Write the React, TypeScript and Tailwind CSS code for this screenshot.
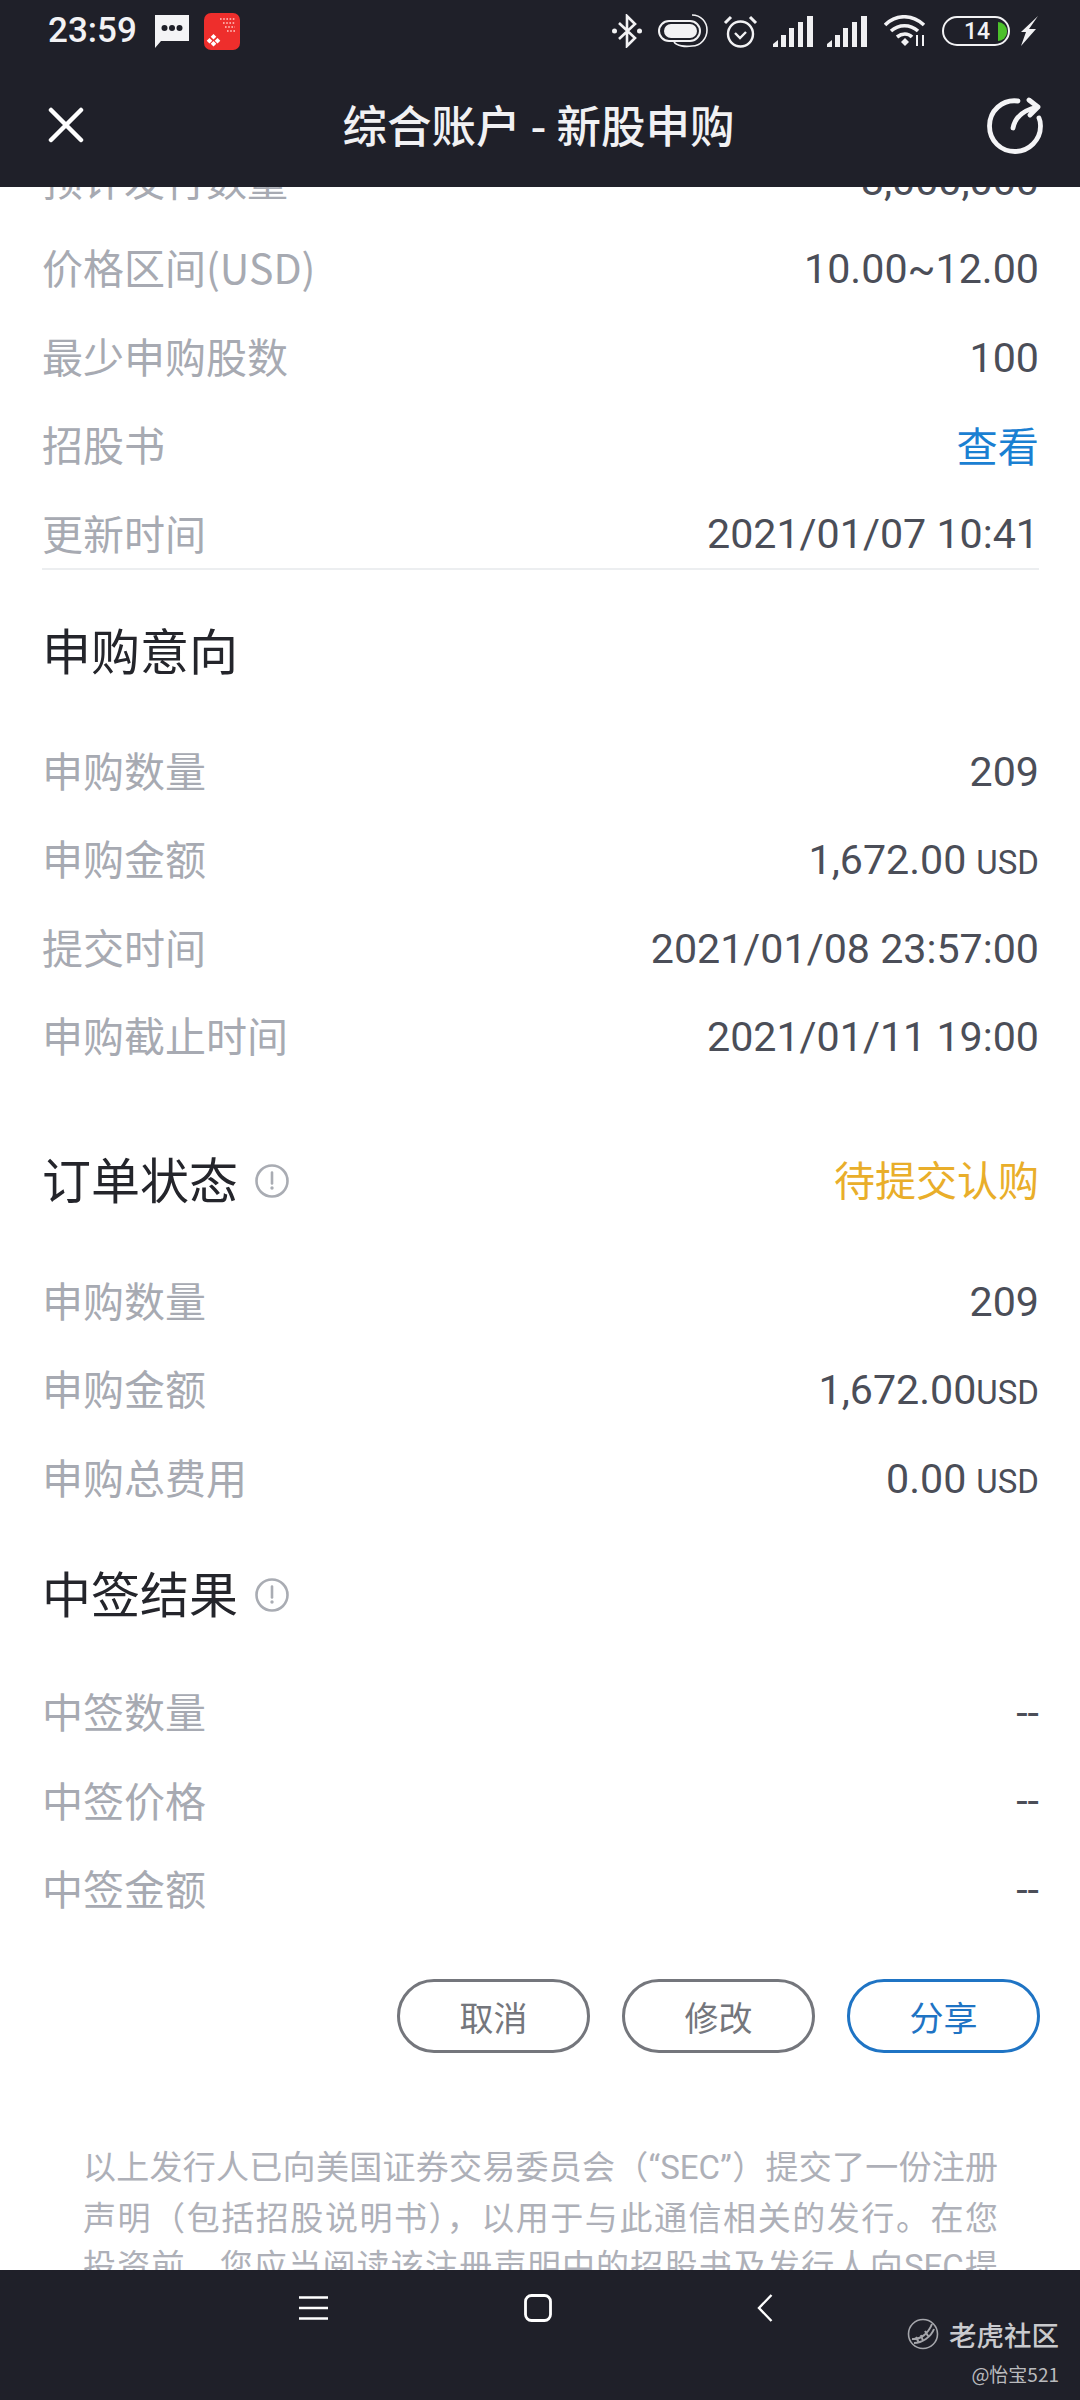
import React from "react";

const cjk = "font-['Noto_Sans_CJK_SC','Noto_Sans',sans-serif]";
const num = "font-['Roboto','Noto_Sans_CJK_SC',sans-serif]";

function Row({ label, children }: { label: string; children: React.ReactNode }) {
  return (
    <div className="flex h-[88.4px] items-center justify-between">
      <span className={`${cjk} mb-[5px] text-[41px] text-[#a7aab2]`}>{label}</span>
      <span className={`${num} mt-[1px] text-[41.2px] text-[#4b4e58]`}>{children}</span>
    </div>
  );
}

function Usd({ tight }: { tight?: boolean }) {
  return <span className={`${tight ? "" : "ml-[10px]"} text-[33px]`}>USD</span>;
}

function Info() {
  return (
    <svg width="36" height="36" viewBox="0 0 36 36" className="ml-[16px] mt-[5px]" fill="none">
      <circle cx="18" cy="18" r="15.5" stroke="#a9acb3" strokeWidth="2.6" />
      <path d="M18 9.5v11" stroke="#a9acb3" strokeWidth="2.6" strokeLinecap="round" />
      <circle cx="18" cy="25" r="1.7" fill="#a9acb3" />
    </svg>
  );
}

function Heading({ children, info }: { children: string; info?: boolean }) {
  return (
    <div className="flex items-center">
      <span className={`${cjk} text-[49px] leading-[60px] text-[#24252b]`}>{children}</span>
      {info && <Info />}
    </div>
  );
}

function Btn({ children, blue }: { children: string; blue?: boolean }) {
  return (
    <button
      className={`${cjk} flex h-[74px] w-[193px] items-center justify-center rounded-full border-[3px] text-[34px] ${
        blue ? "border-[#1f74c4] text-[#1f74c4]" : "border-[#74767c] text-[#74767c]"
      }`}
    >
      {children}
    </button>
  );
}

function Signal() {
  return (
    <svg width="41" height="31" viewBox="0 0 41 31" fill="#f0f0f2">
      <path d="M0 31v-3l5-4v7zM8 31V19h5v12zM16 31V12h5v19zM25 31V6h5v25zM34 31V0h6v31z" />
    </svg>
  );
}

function StatusBar() {
  return (
    <div className="relative flex h-[62px] items-center pl-[48px] pr-[42px]">
      <span className="font-['Roboto',sans-serif] text-[35px] font-medium text-[#f2f2f4]">23:59</span>
      <svg width="34" height="33" viewBox="0 0 34 33" className="ml-[18px]">
        <path d="M0 0h34v26H6l-6 7z" fill="#f4f4f6" />
        <circle cx="9.5" cy="13" r="3" fill="#1f2029" />
        <circle cx="17" cy="13" r="3" fill="#1f2029" />
        <circle cx="24.5" cy="13" r="3" fill="#1f2029" />
      </svg>
      <svg width="36" height="37" viewBox="0 0 36 37" className="ml-[15px]">
        <rect width="36" height="37" rx="7" fill="#ee2e2c" />
        <path d="M9.500 21l2.800 2.800-2.800 2.800-2.800-2.800zM9.500 28l2.800 2.800-2.800 2.800-2.800-2.800zM5.500 25l2.800 2.800-2.800 2.800-2.800-2.800zM13.500 25l2.800 2.800-2.800 2.800-2.800-2.800z" fill="#fff" />
        <path d="M16 6h15M19 10h12M21 14h10M23 18h8" stroke="#ffc9c4" strokeWidth="1.6" strokeDasharray="1.6 1.6" />
      </svg>
      <div className="ml-auto flex items-center">
        <svg width="30" height="34" viewBox="0 0 30 34" fill="none">
          <path d="M7 9l16 15-8 8V2l8 8L7 25" stroke="#f2f2f4" strokeWidth="2.6" />
          <circle cx="2.5" cy="17" r="2.5" fill="#f2f2f4" />
          <circle cx="27.5" cy="17" r="2.5" fill="#f2f2f4" />
        </svg>
        <svg width="50" height="34" viewBox="0 0 50 34" fill="none" className="ml-[16px]">
          <rect x="1" y="7" width="41" height="20" rx="10" stroke="#f2f2f4" strokeWidth="2" />
          <rect x="6" y="10" width="33" height="14" rx="7" fill="#f2f2f4" />
          <path d="M34 1c9 0 15 7 15 15s-6 16-15 16c-7 1-15 0-18-4" stroke="#f2f2f4" strokeWidth="1.6" />
        </svg>
        <svg width="35" height="35" viewBox="0 0 35 35" fill="none" className="ml-[15px]">
          <circle cx="17.5" cy="20" r="12.5" stroke="#f2f2f4" strokeWidth="2.4" />
          <path d="M12 19l5 5 6-6" stroke="#f2f2f4" strokeWidth="2.4" />
          <path d="M2 9l6-6M33 9l-6-6" stroke="#f2f2f4" strokeWidth="3" />
        </svg>
        <div className="ml-[15px]"><Signal /></div>
        <div className="ml-[13px]"><Signal /></div>
        <svg width="42" height="32" viewBox="0 0 42 32" fill="none" className="ml-[16px]">
          <path d="M1 10c11-11 27-11 39 0" stroke="#f2f2f4" strokeWidth="3.6" />
          <path d="M7 16c8-7 19-7 27 0" stroke="#f2f2f4" strokeWidth="3.6" />
          <path d="M13 22c5-4 11-4 15 0" stroke="#f2f2f4" strokeWidth="3.6" />
          <path d="M17 27l4-4 4 4-4 4z" fill="#f2f2f4" />
          <path d="M33 20v11M39 20v11" stroke="#f2f2f4" strokeWidth="2" />
        </svg>
        <div className="ml-[16px] flex h-[30px] w-[68px] items-center rounded-full border-[2.5px] border-[#f2f2f4] pl-[20px]">
          <span className="font-['Roboto',sans-serif] text-[23px] font-medium leading-none text-[#f2f2f4]">14</span>
          <span className="ml-[8px] h-[19px] w-[9px] rounded-r-full bg-[#4cc02b]" />
        </div>
        <svg width="17" height="30" viewBox="0 0 17 30" className="ml-[11px]">
          <path d="M17 0L8 13h7L0 30l5-14H0z" fill="#f2f2f4" />
        </svg>
      </div>
    </div>
  );
}

function NavBar() {
  return (
    <div className="relative flex h-[125px] items-center justify-between pl-[48px] pr-[37px]">
      <svg width="36" height="36" viewBox="0 0 36 36">
        <path d="M3 3l30 30M33 3L3 33" stroke="#fff" strokeWidth="4.5" strokeLinecap="round" />
      </svg>
      <span className={`${cjk} ml-[6px] text-[44.5px] font-medium text-[#f1f1f3]`}>综合账户 - 新股申购</span>
      <svg width="56" height="58" viewBox="0 0 56 58" fill="none">
        <path d="M31 5C15 3 2.500 15 2.500 30S14 55.500 28 55.500 53.500 44 53.500 30c0-3-.5-6-1.500-8" stroke="#f4f4f6" strokeWidth="4.8" strokeLinecap="round" />
        <path d="M26 32c2-10 10-18 25-21M42 4l9 7-8 8" stroke="#f4f4f6" strokeWidth="4.8" strokeLinecap="round" strokeLinejoin="round" />
      </svg>
    </div>
  );
}

function Bottom() {
  return (
    <div className="relative flex h-[130px] shrink-0 bg-[#1f2029]">
      <div className="flex h-[76px] items-center pl-[299px]">
        <svg width="29" height="24" viewBox="0 0 29 24">
          <path d="M0 1.500h29M0 12h29M0 22.500h29" stroke="#fff" strokeWidth="2.6" />
        </svg>
        <svg width="28" height="28" viewBox="0 0 28 28" fill="none" className="ml-[196px]">
          <rect x="1.500" y="1.500" width="25" height="25" rx="6" stroke="#fff" strokeWidth="2.8" />
        </svg>
        <svg width="16" height="28" viewBox="0 0 16 28" fill="none" className="ml-[205px]">
          <path d="M14.500 1L2 14l12.500 13" stroke="#fff" strokeWidth="2.4" />
        </svg>
      </div>
      <div className="absolute right-[21px] top-[47px] flex flex-col items-end">
        <div className="flex items-center">
          <svg width="32" height="34" viewBox="0 0 32 34" fill="none">
            <circle cx="16" cy="17" r="14.500" stroke="#a5a6ab" strokeWidth="1.6" />
            <path d="M5 22c8 1 16-5 20-15M7 26c8 0 17-6 20-14M9 20l3 6M14 18l2 6M18 14l3 5" stroke="#a5a6ab" strokeWidth="2" />
          </svg>
          <span className={`${cjk} ml-[10px] text-[27.5px] font-medium leading-[34px] text-[#c9cacd]`}>老虎社区</span>
        </div>
        <span className={`${cjk} mt-[10px] text-[19px] leading-[26px] text-[#b9babd]`}>@怡宝521</span>
      </div>
    </div>
  );
}

function Line({ children }: { children: React.ReactNode }) {
  return <span className="block whitespace-nowrap text-justify [text-align-last:justify]">{children}</span>;
}

export default function App() {
  return (
    <div className="flex h-[2400px] w-[1080px] flex-col overflow-hidden bg-white">
      <div className="shrink-0 bg-[#1f2029]">
        <StatusBar />
        <NavBar />
      </div>
      <div className="min-h-0 flex-1 overflow-hidden">
        <div className="-mt-[50px] pl-[42px] pr-[41px]">
          <Row label="预计发行数量">8,000,000</Row>
          <Row label="价格区间(USD)">10.00~12.00</Row>
          <Row label="最少申购股数">100</Row>
          <Row label="招股书"><span className={`${cjk} text-[#1a80d2]`}>查看</span></Row>
          <Row label="更新时间">2021/01/07 10:41</Row>
          <div className="border-b-2 border-[#eceef0] -mt-[11px]" />
          <div className="mt-[49px]"><Heading>申购意向</Heading></div>
          <div className="mt-[49px]">
            <Row label="申购数量">209</Row>
            <Row label="申购金额">1,672.00<Usd /></Row>
            <Row label="提交时间">2021/01/08 23:57:00</Row>
            <Row label="申购截止时间">2021/01/11 19:00</Row>
          </div>
          <div className="mt-[66px] flex items-center justify-between">
            <Heading info>订单状态</Heading>
            <span className={`${cjk} text-[41px] text-[#e9ae2a]`}>待提交认购</span>
          </div>
          <div className="mt-[49px]">
            <Row label="申购数量">209</Row>
            <Row label="申购金额">1,672.00<Usd tight /></Row>
            <Row label="申购总费用">0.00<Usd /></Row>
          </div>
          <div className="mt-[39px]"><Heading info>中签结果</Heading></div>
          <div className="mt-[47px]">
            <Row label="中签数量">--</Row>
            <Row label="中签价格">--</Row>
            <Row label="中签金额">--</Row>
          </div>
          <div className="mt-[45px] -mr-[1px] flex justify-end gap-[32px]">
            <Btn>取消</Btn>
            <Btn>修改</Btn>
            <Btn blue>分享</Btn>
          </div>
          <p className={`${cjk} ml-[41px] mr-[41px] mt-[88px] text-[33px] leading-[48px] text-[#aeb0b8]`}>
            <Line>以上发行人已向美国证券交易委员会（<span className={num}>“SEC”</span>）提交了一份注册</Line>
            <Line>声明（包括招股说明书），以用于与此通信相关的发行。在您</Line>
            <Line>投资前，您应当阅读该注册声明中的招股书及发行人向<span className={num}>SEC</span>提</Line>
          </p>
        </div>
      </div>
      <Bottom />
    </div>
  );
}
